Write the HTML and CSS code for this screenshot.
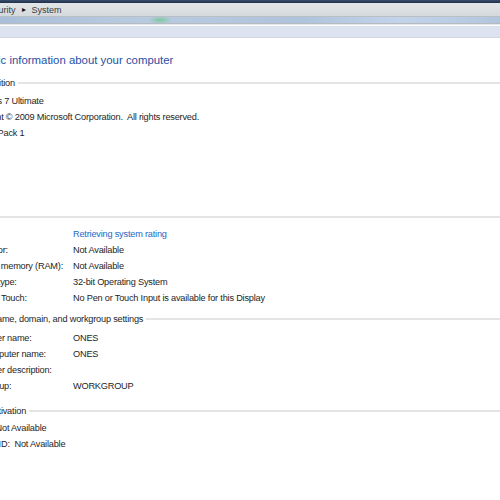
FILE: index.html
```html
<!DOCTYPE html>
<html>
<head>
<meta charset="utf-8">
<link rel="stylesheet" href="styles.css">
</head>
<body>
<div class="chrome">
  <div class="titlebar"></div>
  <div class="address">
    <span class="crumb">Security</span>
    <span class="sep">&#9656;</span>
    <span class="crumb">System</span>
  </div>
  <div class="toolbar"></div>
  <div class="gap"></div>
  <div class="band"></div>
</div>
<main class="content">
  <h1 class="title">View basic information about your computer</h1>

  <section class="group edition">
    <div class="head"><span>Windows edition</span><i class="rule"></i></div>
    <div class="line">Windows 7 Ultimate</div>
    <div class="line">Copyright &copy; 2009 Microsoft Corporation.&nbsp; All rights reserved.</div>
    <div class="line">Service Pack 1</div>
  </section>

  <section class="group system">
    <div class="head"><span>System</span><i class="rule"></i></div>
    <div class="row"><span class="label">Rating:</span><span class="value link">Retrieving system rating</span></div>
    <div class="row"><span class="label">Processor:</span><span class="value">Not Available</span></div>
    <div class="row"><span class="label">Installed memory (RAM):</span><span class="value">Not Available</span></div>
    <div class="row"><span class="label">System type:</span><span class="value">32-bit Operating System</span></div>
    <div class="row"><span class="label">Pen and Touch:</span><span class="value">No Pen or Touch Input is available for this Display</span></div>
  </section>

  <section class="group name">
    <div class="head"><span>Computer name, domain, and workgroup settings</span><i class="rule"></i></div>
    <div class="row"><span class="label">Computer name:</span><span class="value">ONES</span></div>
    <div class="row"><span class="label">Full computer name:</span><span class="value">ONES</span></div>
    <div class="row"><span class="label">Computer description:</span><span class="value"></span></div>
    <div class="row"><span class="label">Workgroup:</span><span class="value">WORKGROUP</span></div>
  </section>

  <section class="group activation">
    <div class="head"><span>Windows activation</span><i class="rule"></i></div>
    <div class="line">Status: Not Available</div>
    <div class="line">Product ID:&nbsp; Not Available</div>
  </section>
</main>
</body>
</html>
```
FILE: styles.css
```css
html, body {
  margin: 0;
  padding: 0;
  background: #ffffff;
  width: 500px;
  height: 500px;
  overflow: hidden;
  font-family: "Liberation Sans", Arial, sans-serif;
  color: #1e1e1e;
}

.chrome {
  display: flex;
  flex-direction: column;
}

.titlebar {
  height: 3px;
  background: linear-gradient(#3a4d6a, #1d2f4c);
}

.address {
  height: 13px;
  background: linear-gradient(#e3e6e8, #d5d9dc);
  border-bottom: 1px solid #b9bfc5;
  display: flex;
  align-items: center;
  gap: 6px;
  margin-left: -17px;
  font-size: 9px;
  color: #3a3a3a;
}

.sep {
  font-size: 8px;
  color: #111;
}

.toolbar {
  height: 6px;
  background:
    radial-gradient(ellipse 12px 4px at 160px 50%, rgba(110,200,140,0.8), rgba(110,200,140,0) 100%),
    linear-gradient(90deg, #a9bfd9 0%, #b8cbe0 30%, #aec3dc 60%, #c2d4ea 80%, #b1c6de 100%);
}

.gap {
  height: 3px;
  background: linear-gradient(#9aa3ad, #f4f5f7 60%, #ffffff);
}

.band {
  height: 11px;
  background: #dde2f1;
  border-bottom: 1px solid #d3d7e3;
}

.content {
  margin-left: -49px;
  width: 549px;
}

.title {
  margin: 12px 0 0 1px;
  font-weight: normal;
  font-size: 11.4px;
  line-height: 20px;
  color: #1f4fa3;
}

.group {
  font-size: 9.2px;
  letter-spacing: -0.2px;
}

.head {
  display: flex;
  align-items: center;
  gap: 3px;
  height: 16px;
  line-height: 16px;
  white-space: nowrap;
}

.rule {
  flex: 1;
  height: 0;
  border-top: 2px solid #e4e4e4;
}

.line, .row {
  line-height: 16px;
  height: 16px;
  margin-left: 15px;
  white-space: nowrap;
}

.row {
  display: grid;
  grid-template-columns: 107px 1fr;
}

.link {
  color: #2668c4;
}

.edition {
  margin-top: 5px;
}
.edition .head {
  margin-bottom: 2px;
}

.system {
  margin-top: 68px;
}
.system .head {
  margin-bottom: 1px;
}

.name {
  margin-top: 5px;
}
.name .head {
  margin-bottom: 3px;
}

.activation {
  margin-top: 9px;
}
.activation .head {
  margin-bottom: 1px;
}
```
